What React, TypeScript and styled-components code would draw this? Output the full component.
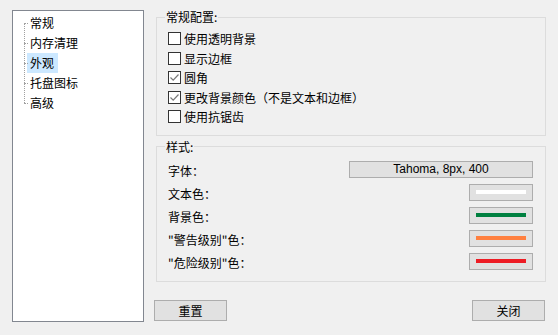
import React, { useState } from 'react';
import styled, { createGlobalStyle } from 'styled-components';

const GlobalStyle = createGlobalStyle`
	html, body {
		margin: 0;
		padding: 0;
		background: #f0f0f0;
	}
	body {
		font-family: "Noto Sans CJK SC", "Liberation Sans", sans-serif;
		font-size: 12px;
		color: #000;
	}
`

const navItems = ['常规', '内存清理', '外观', '托盘图标', '高级'];

const options = [
	{ label: '使用透明背景', checked: false },
	{ label: '显示边框', checked: false },
	{ label: '圆角', checked: true },
	{ label: '更改背景颜色（不是文本和边框）', checked: true },
	{ label: '使用抗锯齿', checked: false },
];

const colors = [
	{ label: '文本色：', color: '#ffffff' },
	{ label: '背景色：', color: '#008040' },
	{ label: '"警告级别"色：', color: '#ff8040' },
	{ label: '"危险级别"色：', color: '#ed1c24' },
];

const CheckBox = ({ checked }: { checked: boolean }) => (
	<StyledBox>
		{checked && (
			<svg width="11" height="11" viewBox="0 0 11 11">
				<path d="M1.5 5.5 L4.2 8.2 L9.5 2.5" fill="none" stroke="#7a7a7a" strokeWidth="1.2" />
			</svg>
		)}
	</StyledBox>
)

export default function App() {
	const [active, setActive] = useState(2);
	const [checks, setChecks] = useState(options.map(o => o.checked));

	return (
		<>
			<GlobalStyle />
			<StyledWindow>
				<StyledTree>
					<StyledTreeList>
						{navItems.map((item, i) => (
							<StyledTreeItem key={item} onClick={() => setActive(i)}>
								<StyledTreeText $active={i === active}>{item}</StyledTreeText>
							</StyledTreeItem>
						))}
					</StyledTreeList>
				</StyledTree>

				<StyledMain>
					<StyledGroup>
						<StyledLegend>常规配置:</StyledLegend>
						<StyledOptions>
							{options.map((o, i) => (
								<StyledOption key={o.label} onClick={() => setChecks(c => c.map((v, j) => j === i ? !v : v))}>
									<CheckBox checked={checks[i]} />
									<span>{o.label}</span>
								</StyledOption>
							))}
						</StyledOptions>
					</StyledGroup>

					<StyledGroup $second>
						<StyledLegend>样式:</StyledLegend>
						<StyledRows>
							<StyledRow>
								<StyledLabel>字体：</StyledLabel>
								<StyledFontButton>Tahoma, 8px, 400</StyledFontButton>
							</StyledRow>
							{colors.map(c => (
								<StyledRow key={c.label}>
									<StyledLabel>{c.label}</StyledLabel>
									<StyledColorButton>
										<StyledSwatch $color={c.color} />
									</StyledColorButton>
								</StyledRow>
							))}
						</StyledRows>
					</StyledGroup>

					<StyledFooter>
						<StyledButton>重置</StyledButton>
						<StyledButton>关闭</StyledButton>
					</StyledFooter>
				</StyledMain>
			</StyledWindow>
		</>
	)
}


const StyledWindow = styled.div`
	display: flex;
	width: 558px;
	height: 335px;
	box-sizing: border-box;
	padding: 10px 0 0 12px;
	gap: 10px;
`

const StyledTree = styled.div`
	width: 132px;
	height: 312px;
	box-sizing: border-box;
	border: 1px solid #828790;
	background: #fff;
	padding: 2px 0 0 14px;
`

const StyledTreeList = styled.div`
	position: relative;
	display: flex;
	flex-direction: column;

	&::before {
		content: '';
		position: absolute;
		left: -3px;
		top: 10px;
		height: 80px;
		border-left: 1px dotted #a0a0a0;
	}
`

const StyledTreeItem = styled.div`
	position: relative;
	height: 20px;
	display: flex;
	align-items: center;

	&::before {
		content: '';
		position: absolute;
		left: -3px;
		top: 10px;
		width: 4px;
		border-top: 1px dotted #a0a0a0;
	}
`

const StyledTreeText = styled.span<{ $active?: boolean }>`
	height: 20px;
	line-height: 20px;
	padding: 0 4px 0 3px;
	background: ${props => props.$active ? '#cce8ff' : 'transparent'};
	cursor: default;
`

const StyledMain = styled.div`
	width: 392px;
	display: flex;
	flex-direction: column;
	margin-top: -1px;
`

const StyledGroup = styled.fieldset<{ $second?: boolean }>`
	margin: ${props => props.$second ? '3px' : '0'} 0 0 2px;
	padding: 0 12px 0 11px;
	border: 1px solid #dcdcdc;
	min-width: 0;
`

const StyledLegend = styled.legend`
	padding: 0 1px;
	margin-left: -3px;
	line-height: 16px;
	height: 16px;
`

const StyledOptions = styled.div`
	display: flex;
	flex-direction: column;
	padding: 4px 0 8px;
`

const StyledOption = styled.label`
	display: flex;
	align-items: center;
	gap: 3px;
	height: 19.5px;
	cursor: default;
`

const StyledBox = styled.span`
	width: 13px;
	height: 13px;
	box-sizing: border-box;
	border: 1px solid #333;
	background: #fff;
	display: flex;
	align-items: center;
	justify-content: center;
`

const StyledRows = styled.div`
	display: flex;
	flex-direction: column;
	padding: 3px 0 8px;
`

const StyledRow = styled.div`
	height: 23px;
	display: flex;
	align-items: center;
	justify-content: space-between;
`

const StyledLabel = styled.span`
	padding-top: 2px;
`

const StyledFontButton = styled.div`
	width: 184px;
	height: 17px;
	box-sizing: border-box;
	border: 1px solid #adadad;
	background: #e1e1e1;
	font-family: "Liberation Sans", sans-serif;
	font-size: 12px;
	line-height: 15px;
	text-align: center;
`

const StyledColorButton = styled.div`
	width: 64px;
	height: 17px;
	box-sizing: border-box;
	border: 1px solid #adadad;
	background: #e1e1e1;
	display: flex;
	align-items: center;
	justify-content: center;
`

const StyledSwatch = styled.div<{ $color: string }>`
	width: 50px;
	height: 4px;
	background: ${props => props.$color};
`

const StyledFooter = styled.div`
	display: flex;
	justify-content: space-between;
	margin-top: 18px;
	padding-right: 1px;
`

const StyledButton = styled.button`
	width: 73px;
	height: 21px;
	box-sizing: border-box;
	border: 1px solid #adadad;
	background: #e1e1e1;
	font-family: "Noto Sans CJK SC", sans-serif;
	font-size: 12px;
	color: #000;
	padding: 0;
`
